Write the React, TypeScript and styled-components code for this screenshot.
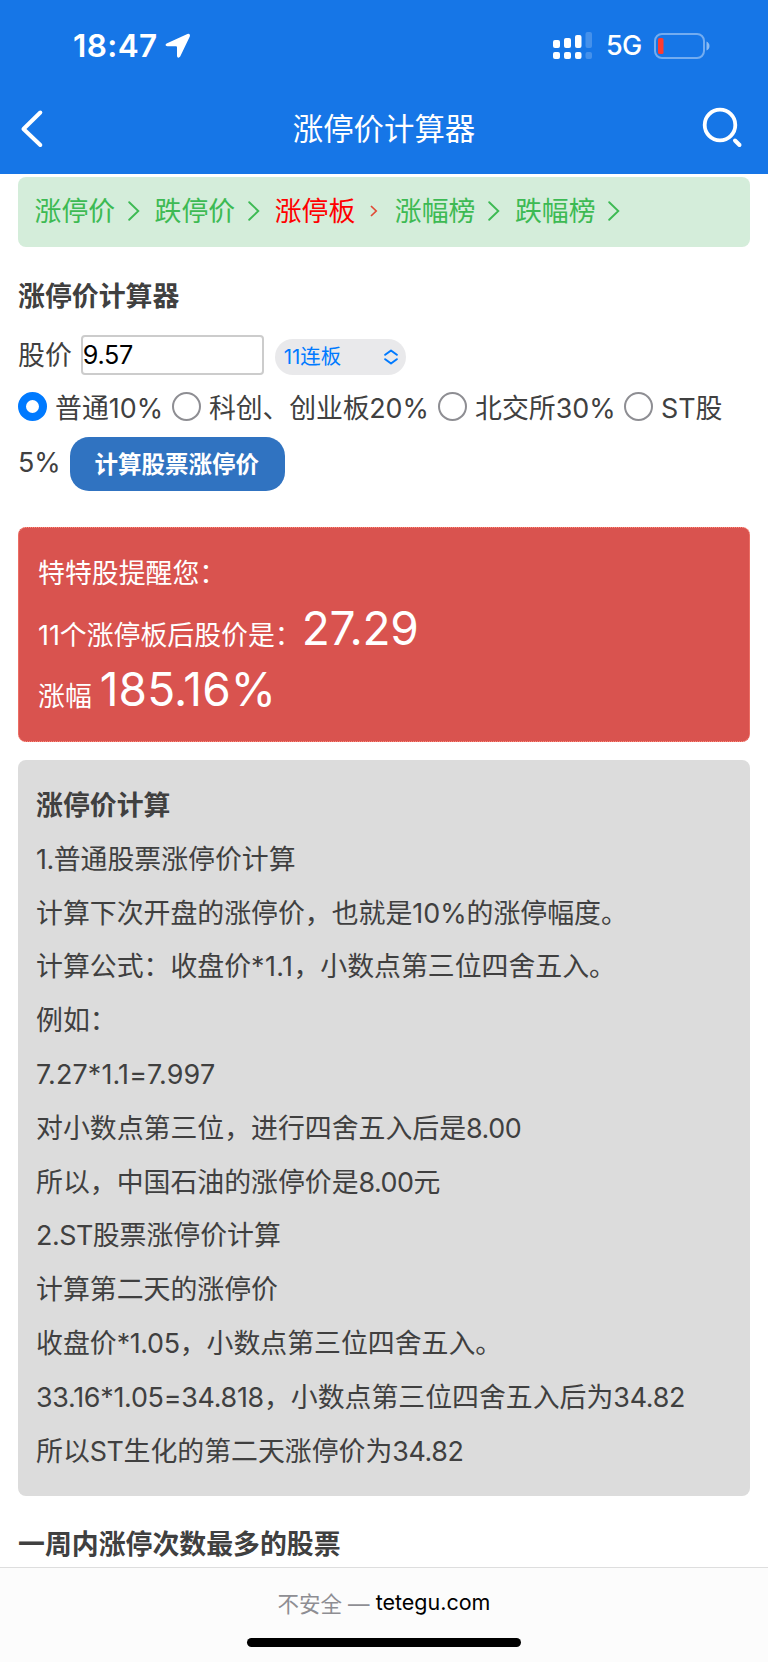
import React from 'react';
import styled, { createGlobalStyle } from 'styled-components';

const Global = createGlobalStyle`
  * { box-sizing: border-box; }
  body { margin: 0; background: #fff; }
  body, input, button {
    font-family: Inter, 'Noto Sans CJK SC', sans-serif;
    font-size: 26.88px;
    color: #404040;
  }
`;

const Page = styled.div`
  width: 768px;
  height: 1662px;
  display: flex;
  flex-direction: column;
  overflow: hidden;
  background: #fff;
`;

const Header = styled.header`
  height: 174px;
  background: #1676e7;
  color: #fff;
  flex: none;
`;

const StatusBar = styled.div`
  height: 94px;
  padding: 0 57px 2px 73px;
  display: flex;
  align-items: center;
`;

const Clock = styled.span`
  font-size: 31.5px;
  font-weight: 600;
  line-height: 40px;
  width: 92px;
  letter-spacing: 0.4px;
  white-space: nowrap;
`;

const StatusRight = styled.div`
  margin-left: auto;
  display: flex;
  align-items: center;
`;

const Network = styled.span`
  font-size: 27px;
  font-weight: 500;
  line-height: 34px;
  width: 34px;
  margin: 0 14px 0 13px;
  letter-spacing: -0.8px;
`;

const TitleBar = styled.div`
  height: 80px;
  padding: 0 25px 10px 20px;
  display: grid;
  grid-template-columns: 46px 1fr 41px;
  align-items: center;
  text-align: center;
`;

const Title = styled.h1`
  margin: 0;
  font-size: 30.4px;
  font-weight: 400;
  line-height: 44px;
`;

const Main = styled.main`
  flex: 1;
  min-height: 0;
  padding: 3px 18px 0;
`;

const Crumbs = styled.nav`
  height: 70px;
  padding: 0 16.5px 2px;
  border-radius: 8px;
  background: #d4edda;
  display: flex;
  align-items: center;
`;

const Crumb = styled.a<{ $active?: boolean }>`
  width: 120.1px;
  height: 54px;
  display: flex;
  align-items: center;
  gap: ${p => (p.$active ? 15 : 12.5)}px;
  color: ${p => (p.$active ? '#ff0000' : '#3dba53')};
  line-height: 54px;
  white-space: nowrap;
`;

const Heading = styled.h2<{ $top: number }>`
  margin: ${p => p.$top}px 0 0;
  font-size: 26.88px;
  font-weight: 600;
  line-height: 54px;
`;

const Row = styled.div<{ $height: number; $lift?: number }>`
  height: ${p => p.$height}px;
  padding-bottom: ${p => p.$lift ?? 0}px;
  display: flex;
  align-items: center;
  white-space: nowrap;
`;

const PriceInput = styled.input`
  width: 183px;
  height: 40px;
  margin: 3px 11px 0 9px;
  padding: 0;
  border: 2px solid #ccc;
  border-radius: 4px;
  background: #fff;
  color: #000;
  font-size: 25.2px;
  letter-spacing: -0.3px;
  outline: none;
`;

const Picker = styled.div`
  width: 131px;
  height: 36px;
  margin-top: 7px;
  padding: 0 8px 0 9px;
  border-radius: 18px;
  background: #e9e9eb;
  color: #007aff;
  font-size: 20.4px;
  line-height: 36px;
  display: flex;
  justify-content: space-between;

  svg { margin-top: 10px; }
`;

const Radio = styled.span<{ $on?: boolean }>`
  width: 29px;
  height: 29px;
  flex: none;
  border-radius: 50%;
  border: ${p => (p.$on ? '8px solid #007aff' : '2px solid #8e8e93')};
  background: #fff;
`;

const Option = styled.label<{ $width: number; $gap?: number; $track?: number }>`
  width: ${p => p.$width}px;
  display: flex;
  align-items: center;
  gap: ${p => p.$gap ?? 8}px;
  letter-spacing: ${p => p.$track ?? 0}px;
`;

const Submit = styled.button`
  width: 215px;
  height: 54px;
  margin: 4px 0 0 9px;
  padding: 0 1px 2px 0;
  border: 0;
  border-radius: 19px;
  background: #3073c1;
  color: #fff;
  font-size: 23.52px;
  font-weight: 600;
`;

const Result = styled.section`
  height: 215px;
  margin-top: 31px;
  padding: 18px 19px;
  border: 1px dotted #ff8a7a;
  border-radius: 8px;
  background: #d9534f;
  color: #fff;
`;

const ResultRow = styled.div<{ $height: number }>`
  height: ${p => p.$height}px;
  display: flex;
  align-items: baseline;
  line-height: ${p => p.$height}px;
  white-space: nowrap;
`;

const Big = styled.span<{ $left: number; $track: number }>`
  font-size: 46px;
  font-weight: 370;
  margin-left: ${p => p.$left}px;
  letter-spacing: ${p => p.$track}px;
`;

const Note = styled.section`
  height: 736px;
  margin-top: 18px;
  padding: 19px 18px;
  border-radius: 8px;
  background: #dcdcdc;
`;

const Line = styled.p<{ $bold?: boolean }>`
  margin: 0;
  height: 53.8px;
  line-height: 53.8px;
  font-weight: ${p => (p.$bold ? 600 : 400)};
  white-space: nowrap;
`;

const Latin = styled.span<{ $track: number }>`
  letter-spacing: ${p => p.$track}px;
`;

const Footer = styled.footer`
  height: 95px;
  flex: none;
  border-top: 1px solid #dedede;
  background: #fcfcfc;
  display: flex;
  flex-direction: column;
  align-items: center;
`;

const Address = styled.div`
  height: 70px;
  padding-bottom: 2px;
  display: flex;
  align-items: center;
  font-size: 21.5px;
  color: #8e8e93;
  white-space: pre;
`;

const Domain = styled.span`
  color: #000;
`;

const HomeIndicator = styled.div`
  width: 274px;
  height: 9px;
  border-radius: 5px;
  background: #000;
`;

const LocationIcon = () => (
  <svg width="26" height="26" viewBox="0 0 26 26">
    <path d="M1.6 10.6 L22.4 0.9 Q25.6 0 24.8 3.4 L15.2 23.6 Q13.2 26 12 23.2 V14.2 Q12 13.2 11 13.2 H2.3 Q-.8 12.4 1.6 10.6Z" fill="#fff" />
  </svg>
);

const SignalIcon = () => (
  <svg width="40" height="28" viewBox="0 0 40 28" fill="#fff">
    <rect x="0" y="8" width="7" height="8" rx="2" />
    <rect x="11" y="6" width="7" height="10" rx="2" />
    <rect x="22" y="3" width="6.5" height="13" rx="2" />
    <rect x="0" y="20" width="7" height="7" rx="2" />
    <rect x="11" y="20" width="7" height="7" rx="2" />
    <rect x="22" y="20" width="6.5" height="7" rx="2" />
    <g opacity="0.2">
      <rect x="32.5" y="0" width="6.5" height="16" rx="2" />
      <rect x="32.5" y="20" width="6.5" height="7" rx="2" />
    </g>
  </svg>
);

const BatteryIcon = () => (
  <svg width="57" height="26" viewBox="0 0 57 26">
    <rect x="1" y="1" width="49" height="24" rx="7" fill="none" stroke="#fff" strokeOpacity="0.4" strokeWidth="2" />
    <rect x="4" y="5" width="5.5" height="16" rx="1.5" fill="#ff3b30" />
    <path d="M52.5 8.5 Q55.5 10 55.5 13 T52.5 17.5Z" fill="#fff" fillOpacity="0.5" />
  </svg>
);

const BackIcon = () => (
  <svg width="24" height="40" viewBox="0 0 24 40">
    <path d="M20.3 3.5 L3.5 20 L20.3 36" fill="none" stroke="#fff" strokeWidth="4" strokeLinecap="round" strokeLinejoin="round" />
  </svg>
);

const SearchIcon = () => (
  <svg width="41" height="44" viewBox="0 0 41 44" fill="none" stroke="#fff" strokeLinecap="round">
    <circle cx="18" cy="18" r="15.3" strokeWidth="3.8" />
    <path d="M33 33.5 L37.5 38" strokeWidth="4" />
  </svg>
);

const Chevron = () => (
  <svg width="12" height="20" viewBox="0 0 12 20">
    <path d="M1.2 1.2 L10.3 10 L1.2 18.8" fill="none" stroke="#3dba53" strokeWidth="1.9" strokeLinecap="round" />
  </svg>
);

const SmallChevron = () => (
  <svg width="8" height="12" viewBox="0 0 8 12">
    <path d="M1 1 L6.2 6 L1 11" fill="none" stroke="#e04a35" strokeWidth="1.7" />
  </svg>
);

const PickerArrows = () => (
  <svg width="14" height="16" viewBox="0 0 14 16" fill="none" stroke="#007aff" strokeWidth="2" strokeLinecap="round" strokeLinejoin="round">
    <path d="M1.2 5.8 L7 1.5 L12.8 5.8 M1.2 10.2 L7 14.5 L12.8 10.2" />
  </svg>
);

const crumbs = ['涨停价', '跌停价', '涨停板', '涨幅榜', '跌幅榜'];

const notes: { text: string; track: number }[] = [
  { text: '1.普通股票涨停价计算', track: -0.5 },
  { text: '计算下次开盘的涨停价，也就是10%的涨停幅度。', track: 0 },
  { text: '计算公式：收盘价*1.1，小数点第三位四舍五入。', track: 0.4 },
  { text: '例如：', track: 0 },
  { text: '7.27*1.1=7.997', track: 0.15 },
  { text: '对小数点第三位，进行四舍五入后是8.00', track: -0.45 },
  { text: '所以，中国石油的涨停价是8.00元', track: -0.5 },
  { text: '2.ST股票涨停价计算', track: -0.5 },
  { text: '计算第二天的涨停价', track: 0 },
  { text: '收盘价*1.05，小数点第三位四舍五入。', track: -0.35 },
  { text: '33.16*1.05=34.818，小数点第三位四舍五入后为34.82', track: -0.27 },
  { text: '所以ST生化的第二天涨停价为34.82', track: -0.4 },
];

const Mixed = ({ text, track }: { text: string; track: number }) => (
  <>
    {text.split(/([A-Za-z0-9.*=%]+)/).map((part, i) =>
      i % 2 ? <Latin key={i} $track={track}>{part}</Latin> : part
    )}
  </>
);

export default function App() {
  return (
    <Page lang="zh-CN">
      <Global />
      <Header>
        <StatusBar>
          <Clock>18:47</Clock>
          <LocationIcon />
          <StatusRight>
            <SignalIcon />
            <Network>5G</Network>
            <BatteryIcon />
          </StatusRight>
        </StatusBar>
        <TitleBar>
          <BackIcon />
          <Title>涨停价计算器</Title>
          <SearchIcon />
        </TitleBar>
      </Header>
      <Main>
        <Crumbs>
          {crumbs.map(name => (
            <Crumb key={name} $active={name === '涨停板'}>
              {name}
              {name === '涨停板' ? <SmallChevron /> : <Chevron />}
            </Crumb>
          ))}
        </Crumbs>
        <Heading $top={22}>涨停价计算器</Heading>
        <Row $height={65} $lift={5}>
          股价
          <PriceInput defaultValue="9.57" />
          <Picker>
            11连板
            <PickerArrows />
          </Picker>
        </Row>
        <Row $height={42} $lift={5}>
          <Option $width={154}><Radio $on />普通10%</Option>
          <Option $width={266} $track={-0.15}><Radio />科创、创业板20%</Option>
          <Option $width={186}><Radio />北交所30%</Option>
          <Option $width={110}><Radio />ST股</Option>
        </Row>
        <Row $height={66} $lift={2}>
          5%
          <Submit>计算股票涨停价</Submit>
        </Row>
        <Result>
          <ResultRow $height={55}>特特股提醒您：</ResultRow>
          <ResultRow $height={55}>
            11个涨停板后股价是：<Big $left={0} $track={-0.3}>27.29</Big>
          </ResultRow>
          <ResultRow $height={67}>
            涨幅<Big $left={8} $track={0.1}>185.16%</Big>
          </ResultRow>
        </Result>
        <Note>
          <Line $bold>涨停价计算</Line>
          {notes.map(n => (
            <Line key={n.text}><Mixed text={n.text} track={n.track} /></Line>
          ))}
        </Note>
        <Heading $top={21}>一周内涨停次数最多的股票</Heading>
      </Main>
      <Footer>
        <Address>不安全 — <Domain>tetegu.com</Domain></Address>
        <HomeIndicator />
      </Footer>
    </Page>
  );
}
